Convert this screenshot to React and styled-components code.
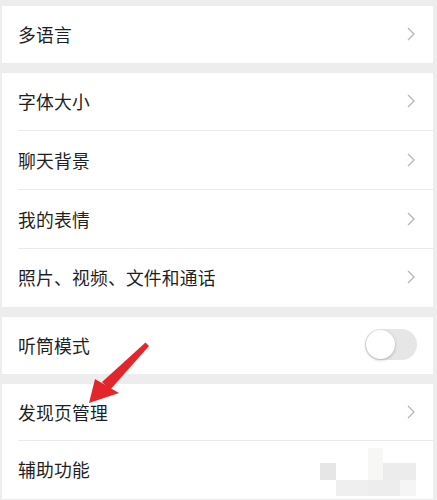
import React from "react";
import styled, { createGlobalStyle } from "styled-components";

const GlobalStyle = createGlobalStyle`
  html, body {
    margin: 0;
    padding: 0;
    background: #ededed;
  }
  body {
    font-family: "Noto Sans CJK SC", "Noto Sans", sans-serif;
  }
`;

const Page = styled.div`
  position: relative;
  width: 437px;
  height: 500px;
  overflow: hidden;
  background: #ededed;
  padding: 6px 4px 0 2px;
  box-sizing: border-box;
  display: flex;
  flex-direction: column;
  gap: 10px;
`;

const Group = styled.div`
  background: #fff;
  display: flex;
  flex-direction: column;
`;

const Row = styled.div`
  height: ${(p) => p.h || 58}px;
  display: flex;
  align-items: center;
  justify-content: space-between;
  padding: 0 18px 2px 16px;
  box-sizing: border-box;
  position: relative;
  ${(p) =>
    p.divider &&
    `
    &::after {
      content: "";
      position: absolute;
      left: 16px;
      right: 0;
      bottom: 0;
      height: 1px;
      background: #ebebeb;
    }
  `}
`;

const Label = styled.span`
  font-size: 17.8px;
  color: #1f1f1f;
  letter-spacing: 0.2px;
`;

const Toggle = styled.div`
  width: 52px;
  height: 31px;
  border-radius: 16px;
  background: #e6e6e6;
  position: relative;
  margin-right: -2px;
  &::before {
    content: "";
    position: absolute;
    left: 1px;
    top: 1px;
    width: 29px;
    height: 29px;
    border-radius: 50%;
    background: #fff;
    box-shadow: 0 1px 3px rgba(0, 0, 0, 0.25);
  }
`;

const Arrow = styled.svg`
  position: absolute;
  left: 80px;
  top: 338px;
`;

// blurred watermark squares in the lower right corner
const Smudge = styled.div`
  position: absolute;
  left: ${(p) => p.x}px;
  top: ${(p) => p.y}px;
  width: ${(p) => p.w}px;
  height: ${(p) => p.h}px;
  background: ${(p) => p.c};
`;

const Chevron = () => (
  <svg width="8" height="14" viewBox="0 0 8 14">
    <path d="M1 1 L7 7 L1 13" fill="none" stroke="#b5b5b5" strokeWidth="1.3" />
  </svg>
);

const Item = ({ label, divider, h, toggle }) => (
  <Row divider={divider} h={h}>
    <Label>{label}</Label>
    {toggle ? <Toggle /> : <Chevron />}
  </Row>
);

const smudges = [
  { x: 300, y: 446, w: 130, h: 52, c: "#ffffff" },
  { x: 320, y: 463, w: 16, h: 17, c: "#e6e6e6" },
  { x: 336, y: 480, w: 32, h: 16, c: "#efefef" },
  { x: 368, y: 448, w: 15, h: 32, c: "#f7f8f6" },
  { x: 368, y: 480, w: 32, h: 16, c: "#ededed" },
  { x: 383, y: 463, w: 33, h: 17, c: "#ececec" },
  { x: 400, y: 480, w: 16, h: 16, c: "#f5f5f5" },
];

export default function App() {
  return (
    <>
      <GlobalStyle />
      <Page>
        <Group>
          <Item label="多语言" h={57} />
        </Group>
        <Group>
          <Item label="字体大小" divider h={58} />
          <Item label="聊天背景" divider h={59} />
          <Item label="我的表情" divider h={59} />
          <Item label="照片、视频、文件和通话" h={58} />
        </Group>
        <Group>
          <Item label="听筒模式" toggle h={57} />
        </Group>
        <Group>
          <Item label="发现页管理" divider h={57} />
          <Item label="辅助功能" h={58} />
        </Group>
        {smudges.map((s, i) => (
          <Smudge key={i} {...s} />
        ))}
        <Arrow width="75" height="72" viewBox="0 0 75 72">
          <polygon points="65.5,4.5 69,8 30,52 22,44" fill="#e3262b" />
          <polygon points="9,65 15,41 39,55" fill="#e3262b" />
        </Arrow>
      </Page>
    </>
  );
}
